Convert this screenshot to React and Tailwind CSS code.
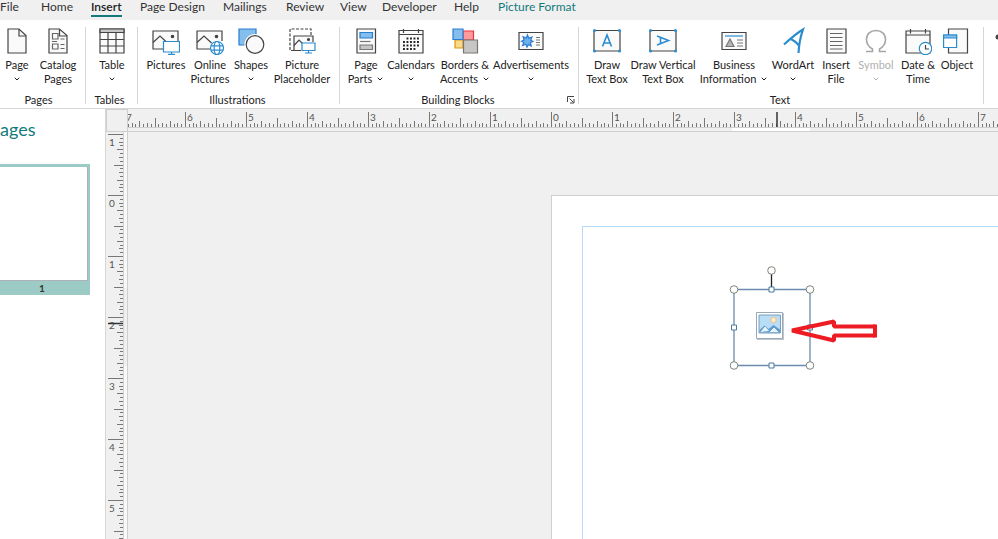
import { ChevronDown } from "lucide-react";

const ink = "#444444";
const blue = "#2b8ccf";

function Chevron() {
  return <ChevronDown size={8} strokeWidth={3} className="inline-block shrink-0" />;
}

function Icon({ children }) {
  return (
    <svg width="28" height="28" viewBox="0 0 28 28" fill="none" stroke={ink} strokeWidth="1.2">
      {children}
    </svg>
  );
}

function PageIcon() {
  return (
    <Icon>
      <path d="M5 2h11L23 8.500V26H5z" fill="#fafafa" />
      <path d="M16 2v7h7" />
    </Icon>
  );
}

function CatalogIcon() {
  return (
    <Icon>
      <path d="M5 2h10.500L23 8.500V26H5z" fill="#fafafa" />
      <path d="M15.500 2v7H23" />
      <path d="M8.500 6.500H14V12H8.500zM8.500 17H14v5H8.500zM16.500 12h4M8 14.500h5M16.500 17.500h4M16.500 21.500h4" stroke="#666" />
    </Icon>
  );
}

function TableIcon() {
  return (
    <Icon>
      <path d="M2 2h24v24H2z" fill="#fafafa" />
      <path d="M2 2h24v3.500H2z" fill="#c8c6c4" />
      <path d="M2 12.500h24M2 19h24M10 5.500V26M18 5.500V26" />
    </Icon>
  );
}

function PicturesIcon() {
  return (
    <Icon>
      <path d="M12 22H1V4h25v10" fill="#fafafa" />
      <path d="M1 15.500l7-6.500 7 6.500" />
      <circle cx="20.500" cy="9.500" r="1.200" fill={ink} />
      <path d="M11.500 14.500h16v10.500h-16z" fill="#fff" stroke={blue} />
      <path d="M19.500 25v2.500M16 27.300h7" stroke={blue} />
    </Icon>
  );
}

function OnlinePicturesIcon() {
  return (
    <Icon>
      <path d="M14 22H1V4h25v10" fill="#fafafa" />
      <path d="M1 15.500l7-6.500 7.500 7" />
      <circle cx="20.500" cy="9.500" r="1.200" fill={ink} />
      <g stroke={blue}>
        <circle cx="21" cy="21" r="6.500" fill="#fff" />
        <ellipse cx="21" cy="21" rx="2.800" ry="6.500" />
        <path d="M15 18.800h12M15 23.200h12" />
      </g>
    </Icon>
  );
}

function ShapesIcon() {
  return (
    <Icon>
      <path d="M2 2h17v16H2z" fill="#83beec" stroke="#2b7cd3" />
      <circle cx="18" cy="17.500" r="10" fill="#fff" stroke="#fff" />
      <circle cx="18" cy="17.500" r="8.800" fill="#fafafa" />
    </Icon>
  );
}

function PlaceholderIcon() {
  return (
    <Icon>
      <path d="M6 23.500H2V2h21v6" strokeDasharray="3 1.500" />
      <path d="M13 23.500H6V9h19v6" fill="#fafafa" />
      <path d="M6 18.500l5-5.500 4 4" />
      <circle cx="20.500" cy="12.500" r="1" fill={ink} />
      <path d="M14 16h13v7.500H14z" fill="#fff" stroke={blue} />
      <path d="M20.500 23.500v2.500M17 26h7" stroke={blue} />
    </Icon>
  );
}

function PagePartsIcon() {
  return (
    <Icon>
      <path d="M5 2h18.500v24H5z" fill="#fafafa" />
      <path d="M8 5.500h12.500v5.500H8z" fill="#83beec" stroke="#2b7cd3" />
      <path d="M8 18h12.500v4.500H8z" fill="#c8c6c4" stroke="#777" />
      <path d="M8 14.500h10.500" stroke="#777" />
    </Icon>
  );
}

function CalendarIcon() {
  return (
    <Icon>
      <path d="M2 3.500h24V26H2z" fill="#fafafa" />
      <path d="M2 7.500h24M6.500 2v4M21.500 2v4" />
      <g strokeDasharray="1.900 1.600" strokeWidth="1.900" stroke="#222">
        <path d="M9.500 11.500h13M6 15h17M6 18.500h17M6 22h12.500" />
      </g>
    </Icon>
  );
}

function BordersIcon() {
  return (
    <Icon>
      <path d="M12 4h10.500v9H12z" fill="#ff9a9c" stroke="#e8343a" />
      <path d="M4 13h8v8H4z" fill="#fbd98b" stroke="#d9970f" />
      <path d="M2 2h10v10.500H2z" fill="#83beec" stroke="#2b7cd3" />
      <path d="M12.500 13h14v13h-14z" fill="#c8c6c4" stroke="#777" />
    </Icon>
  );
}

function AdvertisementsIcon() {
  return (
    <Icon>
      <path d="M2 5.500h24v17H2z" fill="#fafafa" />
      <path
        d="M10.500 8l1.200 3.200 3.200-1.200-1.200 3.200 2.300 1.300-2.600 1 .8 3.500-2.900-1.500-1.300 2.500-1.200-2.700-3.200 1.200 1.200-3-2.300-1.300 2.600-1.200-1-3.200 3.200 1.200z"
        fill="#6cb2e8"
        stroke="#2b7cd3"
      />
      <path d="M19 10.500h4M19 13h4M19 15.500h4M19 18h4" stroke="#777" strokeWidth="1" />
    </Icon>
  );
}

function TextBoxIcon({ vertical }) {
  return (
    <Icon>
      <path d="M1 3.500h26v20.500H1z" fill="#fafafa" />
      <path
        d="M9.500 19.500L14 8l4.500 11.500M11 16h6"
        stroke={blue}
        strokeWidth="1.600"
        transform={vertical ? "rotate(90 14 13.5)" : undefined}
      />
      <g fill={blue} stroke="none">
        <circle cx="1.500" cy="3.500" r="1.500" />
        <circle cx="26.500" cy="3.500" r="1.500" />
        <circle cx="1.500" cy="24" r="1.500" />
        <circle cx="26.500" cy="24" r="1.500" />
      </g>
    </Icon>
  );
}

function BusinessIcon() {
  return (
    <Icon>
      <path d="M2 5.500h24v17H2z" fill="#fafafa" />
      <path d="M5 9h18" stroke={blue} />
      <path d="M10 12l4 7.500H6z" fill="#b5b5b5" stroke="#777" />
      <path d="M17 13h6M17 16h6M17 19h6" stroke="#777" />
    </Icon>
  );
}

function WordArtIcon() {
  return (
    <Icon>
      <path
        d="M5 17.500C10 13 17 6.500 24 2.500c-2.500 7-4 15-4.500 23.500M12 12c3 1.500 6 4 8.500 7"
        stroke={blue}
        strokeWidth="2.200"
      />
    </Icon>
  );
}

function InsertFileIcon() {
  return (
    <Icon>
      <path d="M5 2h19v24H5z" fill="#fafafa" />
      <path d="M8 6.500h12.500M8 10.500h12.500M8 14.500h12.500M8 18.500h12.500M8 22h12.500" stroke="#666" />
    </Icon>
  );
}

function SymbolIcon() {
  return (
    <Icon>
      <path
        d="M4 24.500h6.500V22C7 20 4.500 17 4.500 12.500 4.500 7 8.500 3.500 14 3.500s9.500 3.500 9.500 9c0 4.500-2.500 7.500-6 9.500v2.500H24"
        stroke="#a6a6a6"
        strokeWidth="1.600"
      />
    </Icon>
  );
}

function DateIcon() {
  return (
    <Icon>
      <path d="M2 4h24v22H2z" fill="#fafafa" />
      <path d="M2 8h24M6.500 2v4.500M21.500 2v4.500" />
      <circle cx="21.500" cy="21.500" r="6.200" fill="#fff" stroke={blue} />
      <path d="M21.500 18v4h3.500" />
    </Icon>
  );
}

function ObjectIcon() {
  return (
    <Icon>
      <path d="M5.500 2h19v24h-19z" fill="#fafafa" />
      <path d="M.600 8h13v12.500h-13z" fill="#fff" stroke={blue} />
      <path d="M.600 8h13v3h-13z" fill="#83beec" stroke={blue} />
    </Icon>
  );
}

const tabs = [
  { name: "File", width: "w-[41px]" },
  { name: "Home", width: "w-[50px]" },
  { name: "Insert", width: "w-[49px]" },
  { name: "Page Design", width: "w-[83px]" },
  { name: "Mailings", width: "w-[63px]" },
  { name: "Review", width: "w-[54px]" },
  { name: "View", width: "w-[42px]" },
  { name: "Developer", width: "w-[72px]" },
  { name: "Help", width: "w-[44px]" },
  { name: "Picture Format", width: "w-[84px]" },
];

const groups = [
  {
    name: "Pages",
    className: "w-[86px]",
    items: [
      { lines: ["Page"], icon: PageIcon, menu: true, width: "w-[34px]" },
      { lines: ["Catalog", "Pages"], icon: CatalogIcon, width: "w-[48px]" },
    ],
  },
  {
    name: "Tables",
    className: "w-[52px] pl-1",
    items: [{ lines: ["Table"], icon: TableIcon, menu: true, width: "w-[44px]" }],
  },
  {
    name: "Illustrations",
    className: "w-[202px] pl-1.5",
    items: [
      { lines: ["Pictures"], icon: PicturesIcon, width: "w-[44px]" },
      { lines: ["Online", "Pictures"], icon: OnlinePicturesIcon, width: "w-[44px]" },
      { lines: ["Shapes"], icon: ShapesIcon, menu: true, width: "w-[38px]" },
      { lines: ["Picture", "Placeholder"], icon: PlaceholderIcon, width: "w-[64px]" },
    ],
  },
  {
    name: "Building Blocks",
    className: "w-[239px] pl-1.5",
    launcher: true,
    items: [
      { lines: ["Page", "Parts"], icon: PagePartsIcon, menu: true, width: "w-[40px]" },
      { lines: ["Calendars"], icon: CalendarIcon, menu: true, width: "w-[50px]" },
      { lines: ["Borders &", "Accents"], icon: BordersIcon, menu: true, width: "w-[58px]" },
      { lines: ["Advertisements"], icon: AdvertisementsIcon, menu: true, width: "w-[74px]" },
    ],
  },
  {
    name: "Text",
    className: "w-[405px] pl-1.5",
    items: [
      { lines: ["Draw", "Text Box"], icon: TextBoxIcon, width: "w-[44px]" },
      { lines: ["Draw Vertical", "Text Box"], icon: TextBoxIcon, vertical: true, width: "w-[68px]" },
      { lines: ["Business", "Information"], icon: BusinessIcon, menu: true, width: "w-[74px]" },
      { lines: ["WordArt"], icon: WordArtIcon, menu: true, width: "w-[44px]" },
      { lines: ["Insert", "File"], icon: InsertFileIcon, width: "w-[42px]" },
      { lines: ["Symbol"], icon: SymbolIcon, menu: true, disabled: true, width: "w-[38px]" },
      { lines: ["Date &", "Time"], icon: DateIcon, width: "w-[46px]" },
      { lines: ["Object"], icon: ObjectIcon, width: "w-[32px]" },
    ],
  },
];

function RibbonButton({ item }) {
  const Glyph = item.icon;
  return (
    <button
      disabled={item.disabled}
      className={`${item.width} flex shrink-0 flex-col items-center whitespace-nowrap text-[11px] leading-[14px] text-[#222] disabled:text-[#b1b1b1]`}
    >
      <Glyph vertical={item.vertical} />
      <span className="mt-[3px]">{item.lines[0]}</span>
      <span className="flex h-3.5 items-center gap-1">
        {item.lines[1]}
        {item.menu && <Chevron />}
      </span>
    </button>
  );
}

function RibbonGroup({ group }) {
  return (
    <section className={`${group.className} relative flex shrink-0 flex-col border-r border-[#d6d6d6]`}>
      <div className="flex">
        {group.items.map((item) => (
          <RibbonButton key={item.lines.join(" ")} item={item} />
        ))}
      </div>
      <h2 className="mt-[7px] pr-2 text-center text-[11px] leading-[14px] text-[#222]">{group.name}</h2>
      {group.launcher && (
        <button aria-label="Building Blocks options" className="absolute right-[3px] bottom-0">
          <svg width="9" height="9" viewBox="0 0 9 9" fill="none" stroke={ink}>
            <path d="M1.500 7V1.500H8M3.500 3.500l4 4M8 4v4H4" />
          </svg>
        </button>
      )}
    </section>
  );
}

const UNIT = 61;

function makeTicks(from, to) {
  const ticks = [];
  for (let i = from * 16; i < to * 16; i++) {
    let size = 3;
    if (i % 16 === 0) size = 15;
    else if (i % 8 === 0) size = 9;
    else if (i % 4 === 0) size = 6;
    else if (i % 2 === 0) size = 4;
    ticks.push({ i, offset: Math.round((i * UNIT) / 16), size });
  }
  return ticks;
}

function HorizontalRuler() {
  const zero = 424;
  return (
    <div className="h-[23px] min-w-0 flex-1 overflow-hidden border-b border-[#cfcfcf] bg-[#f0f0f0] pt-px">
      <svg width="100%" height="21" className="block">
        <path d="M0 17.500h2000" stroke="#cfcfcf" />
        <path d="M604 19.500h78" stroke="#fff" strokeWidth="3" />
        {makeTicks(-7, 8).map((t) => (
          <g key={t.i}>
            <path d={`M${zero + t.offset - 0.5} ${17 - t.size}v${t.size}`} stroke="#777" />
            {t.i % 16 === 0 && (
              <text x={zero + t.offset + 1} y="11" fontSize="10" fill="#555">
                {Math.abs(t.i / 16)}
              </text>
            )}
          </g>
        ))}
        <path d="M649 2v15" stroke="#333" strokeWidth="1.500" />
      </svg>
    </div>
  );
}

function VerticalRuler() {
  const zero = 64;
  return (
    <div className="w-[22px] shrink-0 overflow-hidden border-r border-[#cfcfcf] bg-[#f0f0f0]">
      <svg width="21" height="100%" className="block">
        <path d="M17.500 0v2000" stroke="#cfcfcf" />
        <path d="M19.500 0v156M19.500 234v2000" stroke="#f9f9f9" strokeWidth="3" />
        {makeTicks(-1, 6).map((t) => (
          <g key={t.i}>
            <path d={`M${17 - t.size} ${zero + t.offset - 0.5}h${t.size}`} stroke="#777" />
            {t.i % 16 === 0 && (
              <text x="3" y={zero + t.offset + 11} fontSize="10" fill="#555">
                {Math.abs(t.i / 16)}
              </text>
            )}
          </g>
        ))}
        <path d="M2 191.500h15" stroke="#333" strokeWidth="1.500" />
      </svg>
    </div>
  );
}

function SelectedPicture() {
  return (
    <svg width="160" height="110" viewBox="0 0 160 110" fill="none" className="absolute top-[68px] left-[175px]">
      <path d="M44.500 10v15" stroke="#222" strokeWidth="1.300" />
      <path d="M7 25.500h76v76H7z" stroke="#6a8cae" strokeWidth="1.300" />
      <g fill="#fff" stroke="#7c8578">
        <circle cx="44.500" cy="6.500" r="3.800" />
        <circle cx="7" cy="25.500" r="3.800" />
        <circle cx="83" cy="25.500" r="3.800" />
        <circle cx="7" cy="101.500" r="3.800" />
        <circle cx="83" cy="101.500" r="3.800" />
      </g>
      <path
        d="M42 23h5v5h-5zM42 99h5v5h-5zM4.500 61h5v5h-5zM80.500 61h5v5h-5z"
        fill="#fff"
        stroke="#4d789f"
      />
      <path d="M30 49h27v27H30z" fill="#7f8f9d" opacity=".5" />
      <path d="M29.500 48.500h26v26h-26z" fill="#fff" stroke="#9aa7b4" />
      <path d="M32 51h21.500v18H32z" fill="#b9ddf6" stroke="#7d9fbd" />
      <circle cx="46.500" cy="56" r="2.700" fill="#fff1c9" stroke="#f4b97f" />
      <path d="M32.500 66l5-4.500 4 3.500 5-4 6.500 4.500v3h-20.500z" fill="#629ccc" />
      <path d="M34 68l4-5 3.500 4M43 68l4-4 4 4" fill="#e8f4fc" stroke="#e8f4fc" />
      <path d="M65 66.500l42-9v5h41v9h-41v5z" stroke="#ed1c24" strokeWidth="4" strokeLinejoin="bevel" />
      <path d="M146 60.500h4v13h-4z" fill="#ed1c24" />
    </svg>
  );
}

export default function App() {
  return (
    <div className="flex h-screen flex-col overflow-hidden bg-white font-[Lato,'Noto_Sans',sans-serif]">
      <nav className="flex h-5 shrink-0 items-start bg-[#f0f0f0] text-[12px] leading-[14px] text-[#333]">
        {tabs.map((tab) => (
          <button key={tab.name} className={`${tab.width} shrink-0 text-left whitespace-nowrap`}>
            <span
              className={
                tab.name === "Insert"
                  ? "block h-[17px] w-[31px] border-b-2 border-[#127a7a] font-semibold text-[#222]"
                  : tab.name === "Picture Format"
                    ? "block h-[17px] text-[#127a7a]"
                    : "block h-[17px]"
              }
            >
              {tab.name}
            </span>
          </button>
        ))}
      </nav>

      <div className="flex h-[89px] shrink-0 overflow-hidden border-b border-[#d6d6d6] bg-white pt-[7px] pb-1">
        {groups.map((group) => (
          <RibbonGroup key={group.name} group={group} />
        ))}
        {/* next group starts at the window's edge */}
        <svg width="14" height="28" viewBox="0 0 14 28" className="ml-auto shrink-0">
          <circle cx="14" cy="10" r="2.500" fill={ink} />
        </svg>
      </div>

      <main className="flex min-h-0 flex-1">
        <aside className="w-[106px] shrink-0 border-r border-[#d6d6d6]">
          <h1 className="mt-2 text-[18px] leading-6 text-[#127a7a]">ages</h1>
          <button className="mt-[23px] block w-[90px] bg-[#9ccbc5] pt-[3px] pr-[2px]">
            <span className="block h-[114px] border-r border-b border-[#b0b0b8] bg-white" />
            <span className="block h-3.5 pr-1 text-center text-[10px] leading-[14px] font-bold text-[#333]">1</span>
          </button>
        </aside>

        <div className="flex min-w-0 flex-1 flex-col">
          <div className="flex">
            <div className="h-[23px] w-[22px] shrink-0 border border-[#cfcfcf] bg-[#f0f0f0]" />
            <HorizontalRuler />
          </div>
          <div className="flex min-h-0 flex-1">
            <VerticalRuler />
            <div className="min-w-0 flex-1 overflow-hidden bg-[#f0f0f0] pt-[63px] pl-[423px]">
              <div className="relative h-full border-t border-l border-[#cfcfcf] bg-white pt-[30px] pl-[30px]">
                <div className="h-full border-t border-l border-[#b5dafc]" />
                <SelectedPicture />
              </div>
            </div>
          </div>
        </div>
      </main>
    </div>
  );
}
